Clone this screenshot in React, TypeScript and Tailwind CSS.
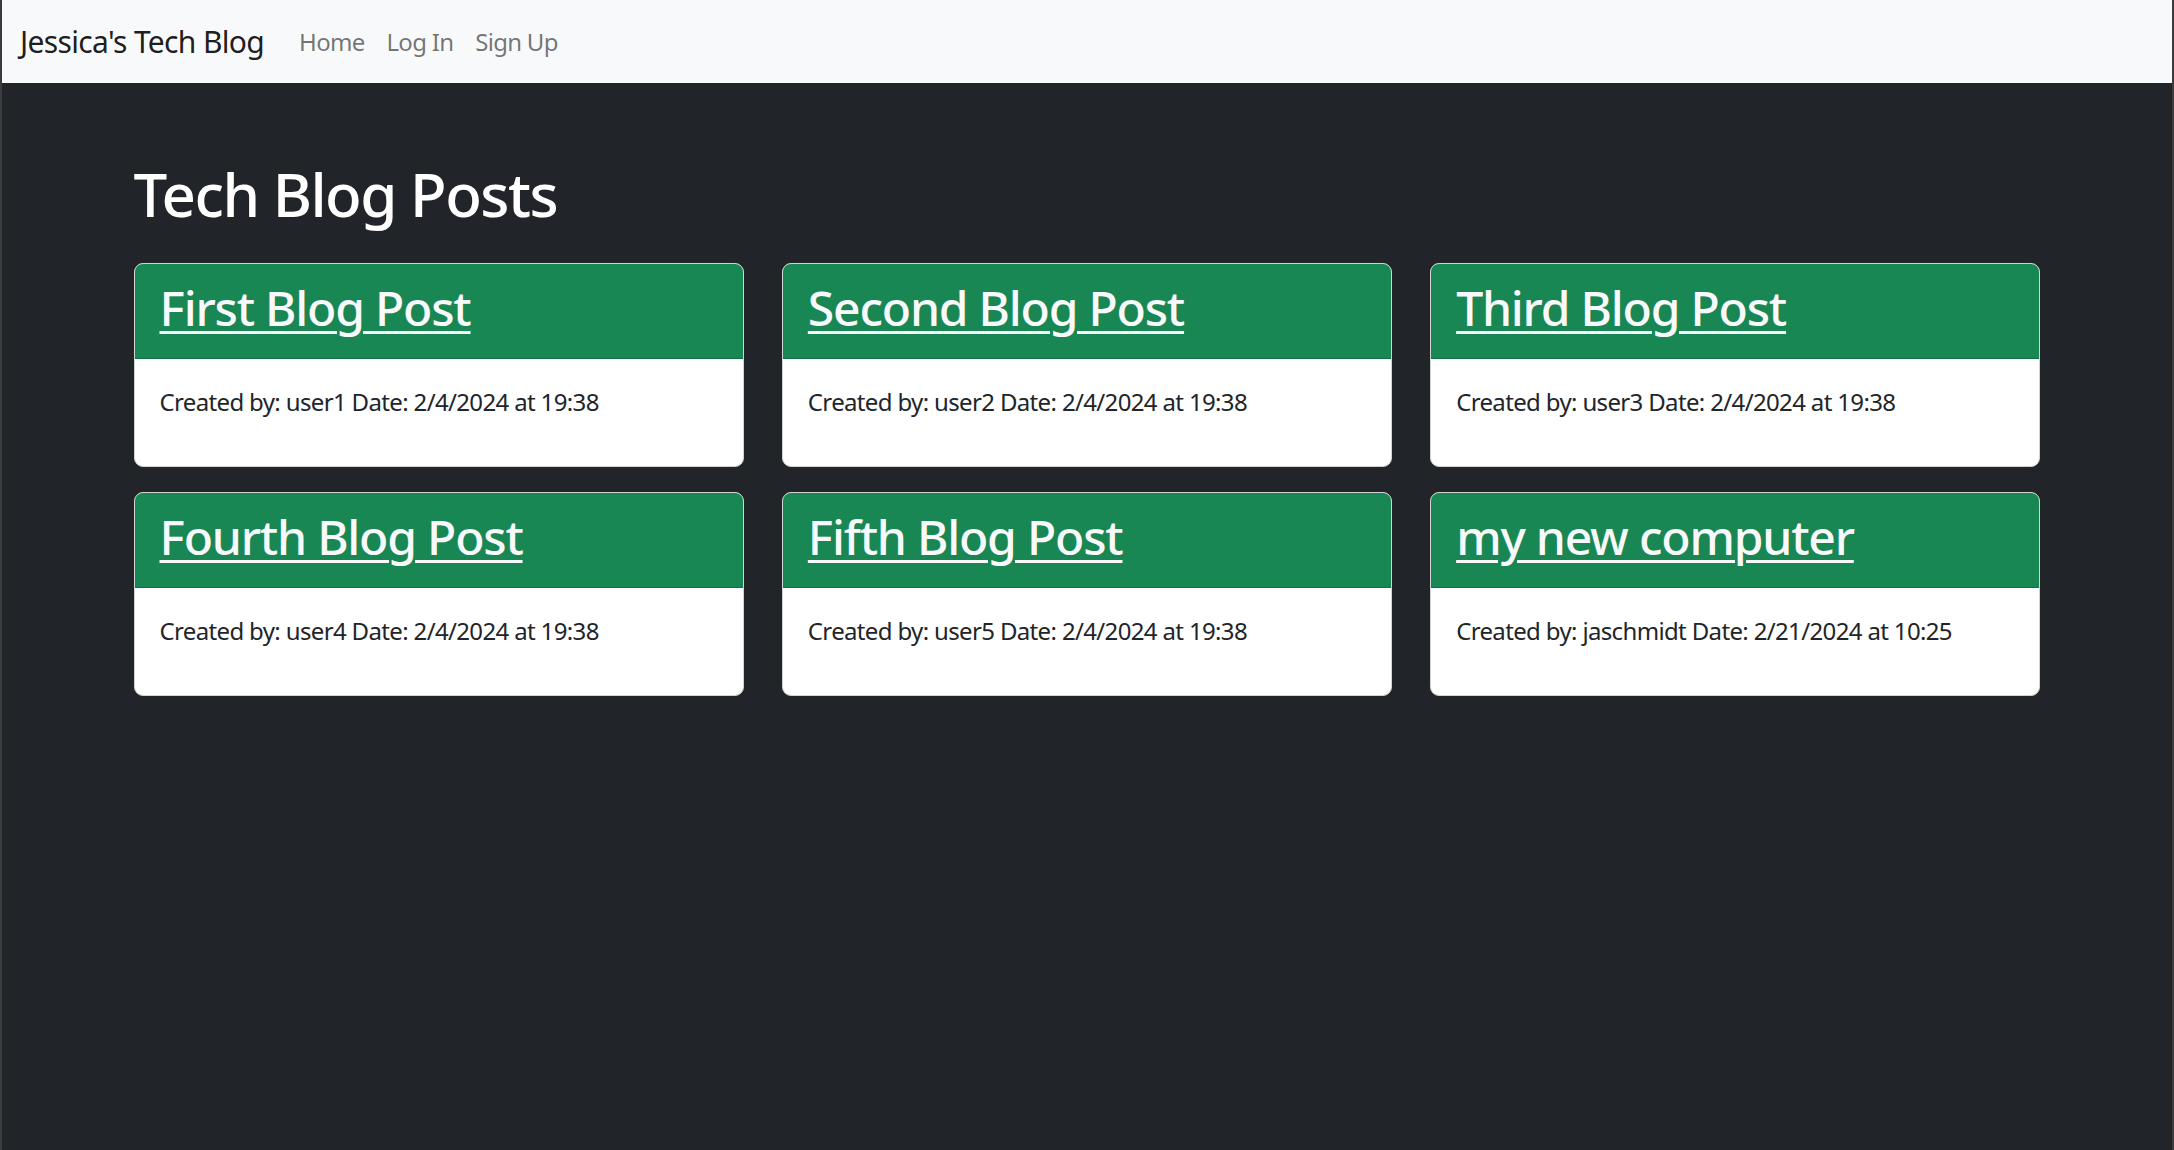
import React from "react";

const posts = [
  { title: "First Blog Post", user: "user1", date: "2/4/2024 at 19:38" },
  { title: "Second Blog Post", user: "user2", date: "2/4/2024 at 19:38" },
  { title: "Third Blog Post", user: "user3", date: "2/4/2024 at 19:38" },
  { title: "Fourth Blog Post", user: "user4", date: "2/4/2024 at 19:38" },
  { title: "Fifth Blog Post", user: "user5", date: "2/4/2024 at 19:38" },
  { title: "my new computer", user: "jaschmidt", date: "2/21/2024 at 10:25" },
];

function Card({ title, user, date }: { title: string; user: string; date: string }) {
  return (
    <div className="flex flex-col rounded-[9px] border border-[#d3d3d3] bg-white overflow-hidden">
      <div className="h-[95px] bg-[#198754] border-b-[1.5px] border-[#156f45] pl-[25px] pt-[15px]">
        <a href="#" className="text-[48px] leading-[57px] font-medium tracking-[-0.025em] text-[#f8f9fa] underline decoration-[3px] underline-offset-[5px]">
          {title}
        </a>
      </div>
      <div className="h-[107px] pl-[25px] pt-[25px]">
        <p className="text-[24px] leading-[36px] tracking-[-0.027em] text-[#212529]">
          Created by: {user} Date: {date}
        </p>
      </div>
    </div>
  );
}

export default function App() {
  return (
    <div className="min-h-screen h-[1150px] bg-[#212529] border-x-2 border-[#3c3c3c] font-['Noto_Sans',sans-serif]">
      <nav className="h-[83px] bg-[#f8f9fa] flex items-center pl-[18px]">
        <span className="text-[30px] leading-none tracking-[-0.022em] text-[rgba(0,0,0,0.9)] mr-[24px]">Jessica's Tech Blog</span>
        <ul className="flex">
          {["Home", "Log In", "Sign Up"].map((l) => (
            <li key={l}>
              <a href="#" className="px-[11px] text-[24px] leading-none tracking-[-0.03em] text-[rgba(0,0,0,0.55)] block">
                {l}
              </a>
            </li>
          ))}
        </ul>
      </nav>
      <main className="w-[1907px] mx-auto pt-[75px]">
        <h1 className="text-[60px] leading-[72px] font-medium tracking-[-0.025em] text-white mb-[33px]">Tech Blog Posts</h1>
        <div className="grid grid-cols-3 gap-x-[38px] gap-y-[25px]">
          {posts.map((p) => (
            <Card key={p.title} {...p} />
          ))}
        </div>
      </main>
    </div>
  );
}
